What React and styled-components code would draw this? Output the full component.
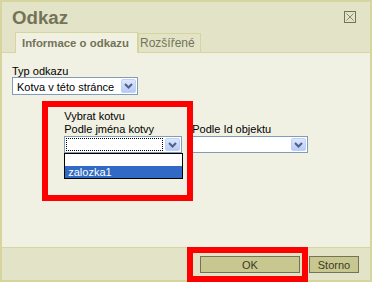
import React from 'react';
import styled, { createGlobalStyle } from 'styled-components';

const GlobalStyle = createGlobalStyle`
  html, body { margin: 0; padding: 0; background: #e3e3c7; }
  body { font-family: "Liberation Sans", Arial, sans-serif; }
  * { box-sizing: border-box; }
`;

const Stage = styled.div`
  position: relative;
  width: 372px;
  height: 282px;
`;

const Dialog = styled.div`
  width: 372px;
  height: 282px;
  border: 2px solid #d5d59d;
  background: #e3e3c7;
  display: flex;
  flex-direction: column;
`;

const TitleBar = styled.div`
  height: 30px;
  flex: none;
  display: flex;
  justify-content: space-between;
  align-items: flex-start;
  padding: 2px 14px 0 10px;
`;

const Title = styled.h1`
  margin: 0;
  font: bold 18.67px/28px "Liberation Sans", Arial, sans-serif;
  color: #737357;
`;

const CloseButton = styled.div`
  width: 12px;
  height: 12px;
  margin-top: 7px;
  display: flex;
`;

const TabRow = styled.div`
  height: 20px;
  flex: none;
  display: flex;
  align-items: flex-end;
  padding-left: 13px;
  position: relative;
  z-index: 1;
`;

const Tab = styled.div`
  height: ${p => (p.$active ? 21 : 19)}px;
  margin-bottom: ${p => (p.$active ? -1 : 0)}px;
  border: 1px solid #d5d59d;
  border-bottom: none;
  background: ${p => (p.$active ? '#f1f1e3' : '#e3e3c7')};
  color: #737357;
  font-family: "Liberation Sans", Arial, sans-serif;
  font-weight: ${p => (p.$active ? 'bold' : 'normal')};
  font-size: ${p => (p.$active ? '11.4px' : '12px')};
  line-height: 15px;
  padding: ${p => (p.$active ? '3px 8px 0 6px' : '2px 5px 0 1px')};
  white-space: nowrap;
`;

const Body = styled.div`
  flex: 1;
  background: #f1f1e3;
  border-top: 1px solid #d5d59d;
  border-bottom: 1px solid #d5d59d;
  padding: 12px 10px;
  font: 11px/12px "Liberation Sans", Arial, sans-serif;
  color: #000;
`;

const Label = styled.div`
  font: 11px/${p => p.$lh || 12}px "Liberation Sans", Arial, sans-serif;
  color: #000;
  white-space: nowrap;
`;

const SelectBox = styled.div`
  position: relative;
  width: ${p => p.$width};
  height: ${p => p.$height}px;
  border: 1px solid #7f9db9;
  background: #fff;
  display: flex;
  align-items: stretch;
`;

const SelectValue = styled.div`
  flex: 1;
  padding: ${p => (p.$focused ? '0 2px' : '2px 4px 0')};
  margin: ${p => (p.$focused ? '1px 1px 1px 1px' : '0')};
  border: ${p => (p.$focused ? '1px dotted #000' : 'none')};
  font: 11px/14px "Liberation Sans", Arial, sans-serif;
  color: #000;
  white-space: nowrap;
  overflow: hidden;
`;

const DropButton = styled.div`
  width: 15px;
  margin: 1px;
  border: 1px solid #c0d0f6;
  border-radius: 2px;
  background: linear-gradient(#dde7fe, #b7caf6);
  display: flex;
  align-items: center;
  justify-content: center;
`;

const DropList = styled.div`
  position: absolute;
  top: calc(100% + 1px);
  left: -1px;
  width: 119px;
  border: 1px solid #000;
  background: #fff;
  z-index: 2;
`;

const DropItem = styled.div`
  height: 12px;
  padding-left: 3px;
  font: 11px/13px "Liberation Sans", Arial, sans-serif;
  color: ${p => (p.$selected ? '#fff' : '#000')};
  background: ${p => (p.$selected ? '#316ac5' : '#fff')};
  white-space: nowrap;
`;

const AnchorTable = styled.div`
  width: 70%;
  margin: 15px auto 0;
  display: grid;
  grid-template-columns: 128px 1fr;
`;

const FullRow = styled.div`
  grid-column: 1 / -1;
`;

const Cell = styled.div`
  display: flex;
  flex-direction: column;
`;

const Footer = styled.div`
  height: 32px;
  flex: none;
  display: flex;
  justify-content: flex-end;
  align-items: flex-start;
  gap: 9px;
  padding: 8px 11px 0 0;
`;

const Button = styled.div`
  width: ${p => p.$width}px;
  height: 17px;
  border: 1px solid #737357;
  background: #c7c78f;
  color: #3b3b1f;
  font: 11px/14px "Liberation Sans", Arial, sans-serif;
  padding-top: 1px;
  text-align: center;
`;

const Highlight = styled.div`
  position: absolute;
  left: ${p => p.$x}px;
  top: ${p => p.$y}px;
  width: ${p => p.$w}px;
  height: ${p => p.$h}px;
  border: 6px solid #ff0000;
  pointer-events: none;
  z-index: 5;
`;

const Chevron = () => (
  <svg width="9" height="6" viewBox="0 0 9 6">
    <path d="M1 1 L4.5 4.5 L8 1" fill="none" stroke="#4d6185" strokeWidth="2" />
  </svg>
);

const CloseIcon = () => (
  <svg width="12" height="12" viewBox="0 0 12 12">
    <rect x="0.5" y="0.5" width="11" height="11" fill="none" stroke="#737357" />
    <path d="M2.5 2.5 L9.5 9.5 M9.5 2.5 L2.5 9.5" stroke="#8a8a6c" strokeWidth="1" />
  </svg>
);

const Select = ({ width, height, value, focused, children }) => (
  <SelectBox $width={width} $height={height}>
    <SelectValue $focused={focused}>{value}</SelectValue>
    <DropButton>
      <Chevron />
    </DropButton>
    {children}
  </SelectBox>
);

export default function App() {
  return (
    <Stage>
      <GlobalStyle />
      <Dialog>
        <TitleBar>
          <Title>Odkaz</Title>
          <CloseButton>
            <CloseIcon />
          </CloseButton>
        </TitleBar>
        <TabRow>
          <Tab $active>Informace o odkazu</Tab>
          <Tab>Rozšířené</Tab>
        </TabRow>
        <Body>
          <Label>Typ odkazu</Label>
          <Select width="126px" height={18} value="Kotva v této stránce" />
          <AnchorTable>
            <FullRow>
              <Label $lh={13}>Vybrat kotvu</Label>
            </FullRow>
            <Cell>
              <Label $lh={13}>Podle jména kotvy</Label>
              <Select width="118px" height={17} value="" focused>
                <DropList>
                  <DropItem>&nbsp;</DropItem>
                  <DropItem $selected>zalozka1</DropItem>
                </DropList>
              </Select>
            </Cell>
            <Cell>
              <Label $lh={13}>Podle Id objektu</Label>
              <Select width="100%" height={17} value="" />
            </Cell>
          </AnchorTable>
        </Body>
        <Footer>
          <Button $width={100}>OK</Button>
          <Button $width={50}>Storno</Button>
        </Footer>
      </Dialog>
      <Highlight $x={42} $y={101} $w={151} $h={100} />
      <Highlight $x={187} $y={247} $w={121} $h={35} />
    </Stage>
  );
}
